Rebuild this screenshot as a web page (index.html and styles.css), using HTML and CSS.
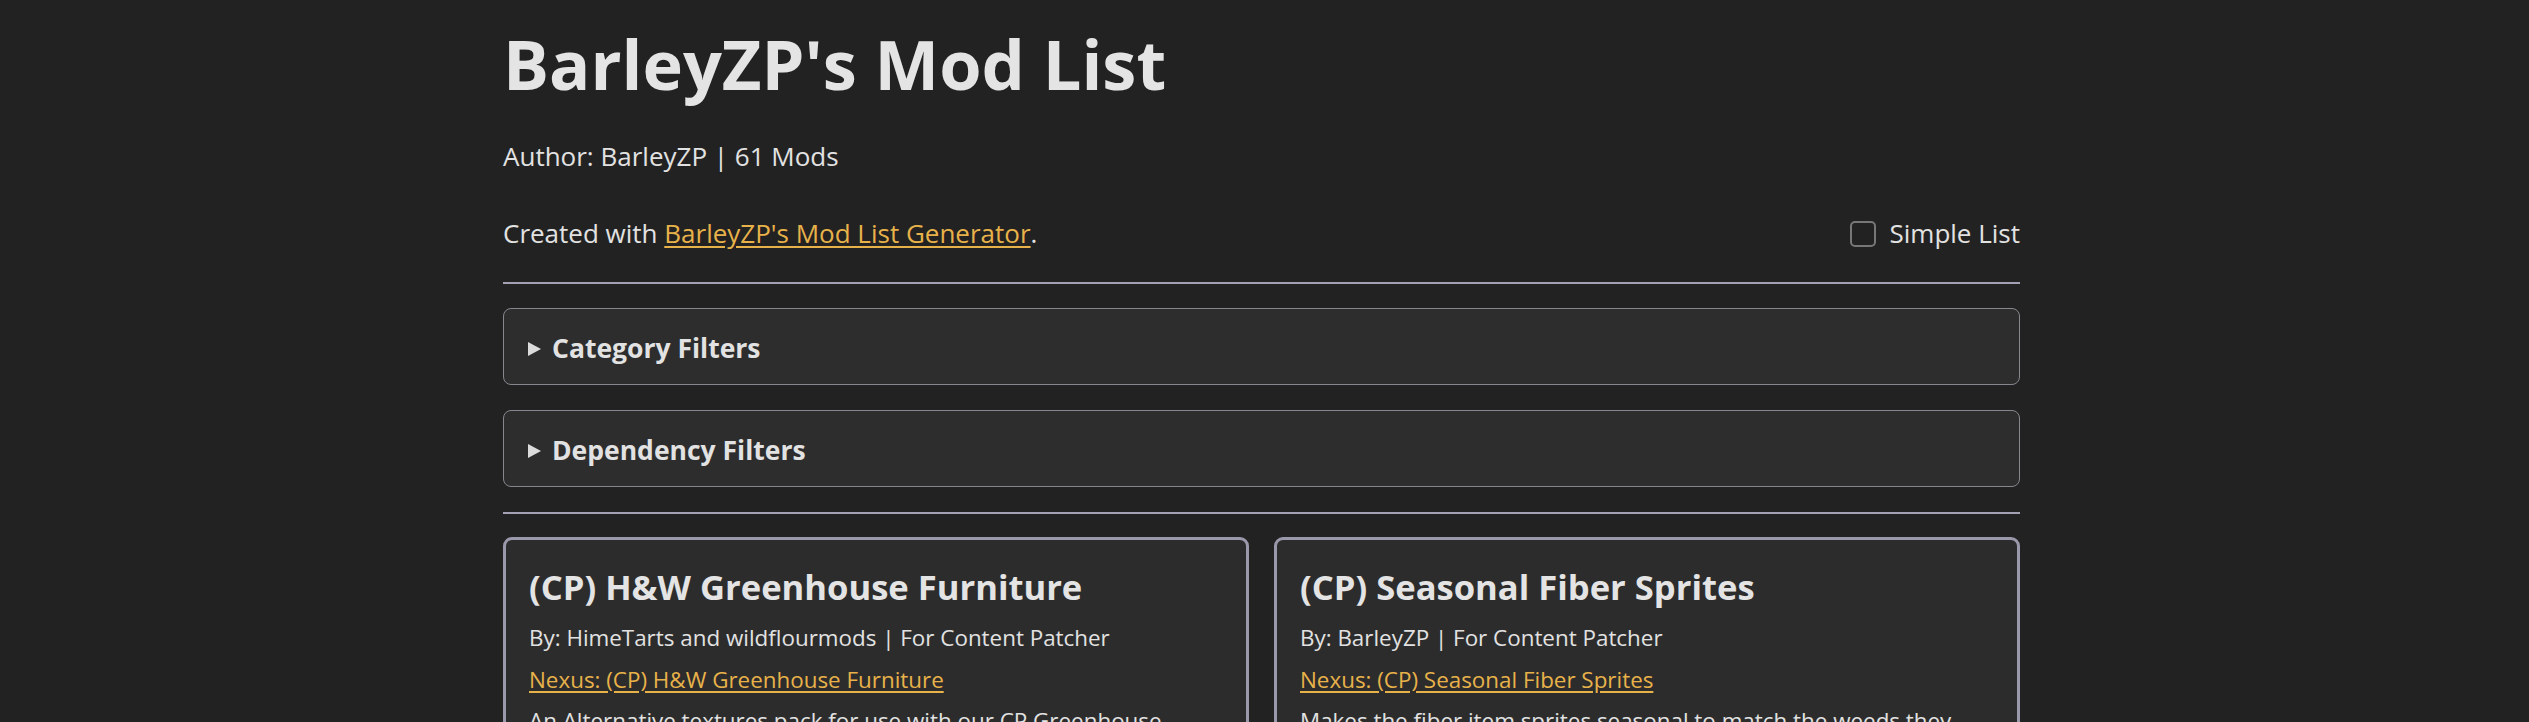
FILE: index.html
```html
<!DOCTYPE html>
<html lang="en">
<head>
<meta charset="utf-8">
<title>BarleyZP's Mod List</title>
<link rel="stylesheet" href="styles.css">
</head>
<body>
<main class="page">
  <h1 class="title">BarleyZP's Mod List</h1>
  <p class="meta">Author: BarleyZP | 61 Mods</p>
  <div class="created-row">
    <span>Created with <a class="link" href="#">BarleyZP's Mod List Generator</a>.</span>
    <label class="simple-toggle"><input type="checkbox" class="checkbox"><span>Simple List</span></label>
  </div>
  <hr class="rule rule-top">
  <details class="filter">
    <summary>Category Filters</summary>
  </details>
  <details class="filter">
    <summary>Dependency Filters</summary>
  </details>
  <hr class="rule rule-bottom">
  <section class="grid">
    <article class="card">
      <h3 class="card-title">(CP) H&amp;W Greenhouse Furniture</h3>
      <p>By: HimeTarts and wildflourmods | For Content Patcher</p>
      <p><a class="link" href="#">Nexus: (CP) H&amp;W Greenhouse Furniture</a></p>
      <p>An Alternative textures pack for use with our CP Greenhouse Furniture mod.</p>
    </article>
    <article class="card">
      <h3 class="card-title">(CP) Seasonal Fiber Sprites</h3>
      <p>By: BarleyZP | For Content Patcher</p>
      <p><a class="link" href="#">Nexus: (CP) Seasonal Fiber Sprites</a></p>
      <p>Makes the fiber item sprites seasonal to match the weeds they drop from.</p>
    </article>
  </section>
</main>
</body>
</html>
```
FILE: styles.css
```css
html, body {
  background: #222222;
}
body {
  margin: 0;
  padding: 0 6px 0 0;
  color: #e2e2e2;
  font-family: "Open Sans", "Noto Sans", sans-serif;
}
.page {
  width: 1517px;
  margin: 0 auto;
}
.title {
  font-size: 68.5px;
  font-weight: 700;
  line-height: 83px;
  margin: 22px 0 32px;
  color: #e4e4e4;
}
.meta {
  font-size: 26px;
  line-height: 39px;
  margin: 0 0 38px;
}
.created-row {
  display: flex;
  justify-content: space-between;
  align-items: center;
  font-size: 26px;
  line-height: 39px;
}
.link {
  color: #e8b24a;
  text-decoration: underline;
  text-underline-offset: 3px;
}
.simple-toggle {
  display: flex;
  align-items: center;
  gap: 13px;
}
.checkbox {
  appearance: none;
  -webkit-appearance: none;
  width: 26px;
  height: 26px;
  margin: 0;
  border: 2px solid #777777;
  border-radius: 5px;
  background: transparent;
}
.rule {
  height: 2px;
  border: 0;
  background: #a3a1b3;
}
.rule-top {
  margin: 29px 0 24px;
}
.rule-bottom {
  margin: 0 0 23px;
}
.filter {
  background: #2d2d2d;
  border: 1px solid #86868e;
  border-radius: 8px;
  margin: 0 0 25px;
}
.filter summary {
  list-style: none;
  display: flex;
  align-items: center;
  gap: 11px;
  padding: 20px 23px 16px;
  font-size: 26.5px;
  font-weight: 700;
  line-height: 39px;
  cursor: pointer;
}
.filter summary::-webkit-details-marker {
  display: none;
}
.filter summary::before {
  content: "";
  width: 0;
  height: 0;
  margin-left: 1px;
  border-left: 13px solid #dcdcdc;
  border-top: 7.5px solid transparent;
  border-bottom: 7.5px solid transparent;
}
.grid {
  display: grid;
  grid-template-columns: 1fr 1fr;
  gap: 25px;
}
.card {
  background: #2c2c2c;
  border: 3px solid #9a98ab;
  border-radius: 9px;
  padding: 26px 23px 23px;
}
.card-title {
  font-size: 34.6px;
  font-weight: 700;
  line-height: 42px;
  margin: 0 0 13px;
  color: #e4e4e4;
}
.card p {
  font-size: 22.4px;
  line-height: 33.6px;
  margin: 0 0 8px;
}
```
